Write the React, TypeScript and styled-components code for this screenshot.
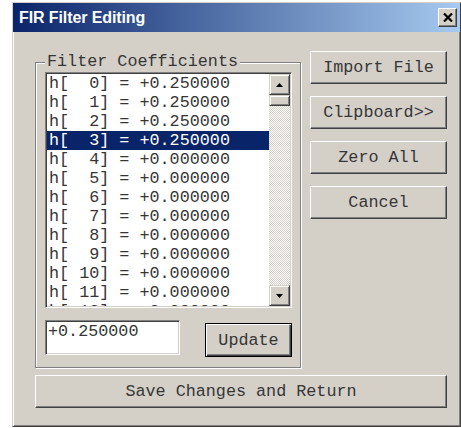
import styled, { createGlobalStyle } from "styled-components";

const GlobalStyle = createGlobalStyle`
	html, body {
		margin: 0;
		background: #ffffff;
		overflow: hidden;
	}
`;

const FACE = "#d4d0c8";
const INK = "#363636";
const MONO = "'Liberation Mono', 'Courier New', monospace";

const Window = styled.div`
	display: flex;
	flex-direction: column;
	box-sizing: border-box;
	margin: 2px 0 0 12px;
	width: 449px;
	height: 425px;
	background: ${FACE};
	border: 1px solid;
	border-color: ${FACE} #404040 #404040 ${FACE};
	box-shadow: inset 1px 1px 0 #ffffff, inset -1px -1px 0 #808080;
`;

const TitleBar = styled.div`
	display: flex;
	align-items: center;
	justify-content: space-between;
	height: 29px;
	padding: 0 3px 0 6px;
	background: linear-gradient(to right, #0a246a, #a6caf0);
`;

const Title = styled.span`
	font-family: 'Liberation Sans', Arial, sans-serif;
	font-weight: 700;
	font-size: 16px;
	color: #ffffff;
	letter-spacing: -0.1px;
`;

const CloseButton = styled.div`
	display: flex;
	align-items: center;
	justify-content: center;
	box-sizing: border-box;
	width: 19px;
	height: 19px;
	background: ${FACE};
	border: 1px solid;
	border-color: #ffffff #404040 #404040 #ffffff;
	box-shadow: inset -1px -1px 0 #808080;
`;

const Body = styled.div`
	flex: 1;
	display: flex;
	flex-direction: column;
	padding: 19px 13px 0 22px;
`;

const MainRow = styled.div`
	display: flex;
	gap: 9px;
	align-items: flex-start;
`;

const GroupBox = styled.div`
	position: relative;
	box-sizing: border-box;
	width: 266px;
	height: 306px;
	margin-top: 11px;
	padding: 9px 8px 0 9px;
	border: 1px solid #808080;
	box-shadow: 1px 1px 0 #ffffff, inset 1px 1px 0 #ffffff;
	display: flex;
	flex-direction: column;
`;

const Caption = styled.span`
	position: absolute;
	top: -11px;
	left: 9px;
	padding: 0 2px;
	background: ${FACE};
	font-family: ${MONO};
	font-size: 16.75px;
	line-height: 19px;
	color: ${INK};
`;

const sunken = `
	border: 1px solid;
	border-color: #808080 #ffffff #ffffff #808080;
	box-shadow: inset 1px 1px 0 #404040, inset -1px -1px 0 ${FACE};
`;

const ListBox = styled.div`
	display: flex;
	box-sizing: border-box;
	height: 236px;
	padding: 1px;
	background: #ffffff;
	${sunken}
`;

const Rows = styled.div`
	flex: 1;
	overflow: hidden;
`;

const Row = styled.div<{ $selected?: boolean }>`
	height: 19px;
	padding-left: 2px;
	white-space: pre;
	font-family: ${MONO};
	font-size: 16.75px;
	line-height: 19px;
	color: ${(p) => (p.$selected ? "#ffffff" : INK)};
	background: ${(p) => (p.$selected ? "#0a246a" : "transparent")};
`;

const ScrollBar = styled.div`
	display: flex;
	flex-direction: column;
	width: 21px;
`;

const raised = `
	box-sizing: border-box;
	background: ${FACE};
	border: 1px solid;
	border-color: ${FACE} #404040 #404040 ${FACE};
	box-shadow: inset 1px 1px 0 #ffffff, inset -1px -1px 0 #808080;
`;

const ScrollButton = styled.div`
	display: flex;
	align-items: center;
	justify-content: center;
	height: 21px;
	${raised}
`;

const Thumb = styled.div`
	height: 11px;
	${raised}
`;

const Track = styled.div`
	flex: 1;
	background: repeating-conic-gradient(${FACE} 0 25%, #ffffff 0 50%) 0 0 / 2px 2px;
`;

const EditRow = styled.div`
	display: flex;
	align-items: flex-start;
	justify-content: space-between;
	margin-top: 12px;
`;

const TextBox = styled.div`
	box-sizing: border-box;
	width: 135px;
	height: 35px;
	padding: 1px 2px;
	background: #ffffff;
	font-family: ${MONO};
	font-size: 16.75px;
	line-height: 19px;
	color: ${INK};
	${sunken}
`;

const Button = styled.button<{ $default?: boolean; $width?: number }>`
	box-sizing: border-box;
	width: ${(p) => (p.$width ? `${p.$width}px` : "100%")};
	height: ${(p) => (p.$default ? 34 : 33)}px;
	margin: 0;
	padding: 0;
	background: ${FACE};
	border: 1px solid;
	border-color: ${(p) => (p.$default ? "#000000" : "#ffffff #404040 #404040 #ffffff")};
	box-shadow: ${(p) =>
		p.$default
			? "inset 1px 1px 0 #ffffff, inset -1px -1px 0 #404040, inset -2px -2px 0 #808080"
			: "inset -1px -1px 0 #808080"};
	font-family: ${MONO};
	font-size: 16.75px;
	color: ${INK};
	margin-top: ${(p) => (p.$default ? "3px" : "0")};
`;

const ButtonColumn = styled.div`
	display: flex;
	flex-direction: column;
	gap: 12px;
	width: 137px;
`;

const SaveRow = styled.div`
	margin-top: 7px;
`;

const coefficients = [0.25, 0.25, 0.25, 0.25, 0, 0, 0, 0, 0, 0, 0, 0, 0];

const formatRow = (i: number, v: number) =>
	`h[${String(i).padStart(3, " ")}] = +${v.toFixed(6)}`;

const Arrow = ({ down }: { down?: boolean }) => (
	<svg width="7" height="4" viewBox="0 0 7 4">
		<polygon points={down ? "0,0 7,0 3.5,4" : "3.5,0 7,4 0,4"} fill="#000" />
	</svg>
);

export default function App() {
	return (
		<>
			<GlobalStyle />
			<Window>
				<TitleBar>
					<Title>FIR Filter Editing</Title>
					<CloseButton>
						<svg width="10" height="9" viewBox="0 0 10 9">
							<path d="M1 0.5 L9 8.5 M9 0.5 L1 8.5" stroke="#000" strokeWidth="2.2" />
						</svg>
					</CloseButton>
				</TitleBar>
				<Body>
					<MainRow>
						<GroupBox>
							<Caption>Filter Coefficients</Caption>
							<ListBox>
								<Rows>
									{coefficients.map((v, i) => (
										<Row key={i} $selected={i === 3}>
											{formatRow(i, v)}
										</Row>
									))}
								</Rows>
								<ScrollBar>
									<ScrollButton>
										<Arrow />
									</ScrollButton>
									<Thumb />
									<Track />
									<ScrollButton>
										<Arrow down />
									</ScrollButton>
								</ScrollBar>
							</ListBox>
							<EditRow>
								<TextBox>+0.250000</TextBox>
								<Button $default $width={87}>
									Update
								</Button>
							</EditRow>
						</GroupBox>
						<ButtonColumn>
							<Button>Import File</Button>
							<Button>Clipboard&gt;&gt;</Button>
							<Button>Zero All</Button>
							<Button>Cancel</Button>
						</ButtonColumn>
					</MainRow>
					<SaveRow>
						<Button>Save Changes and Return</Button>
					</SaveRow>
				</Body>
			</Window>
		</>
	);
}
